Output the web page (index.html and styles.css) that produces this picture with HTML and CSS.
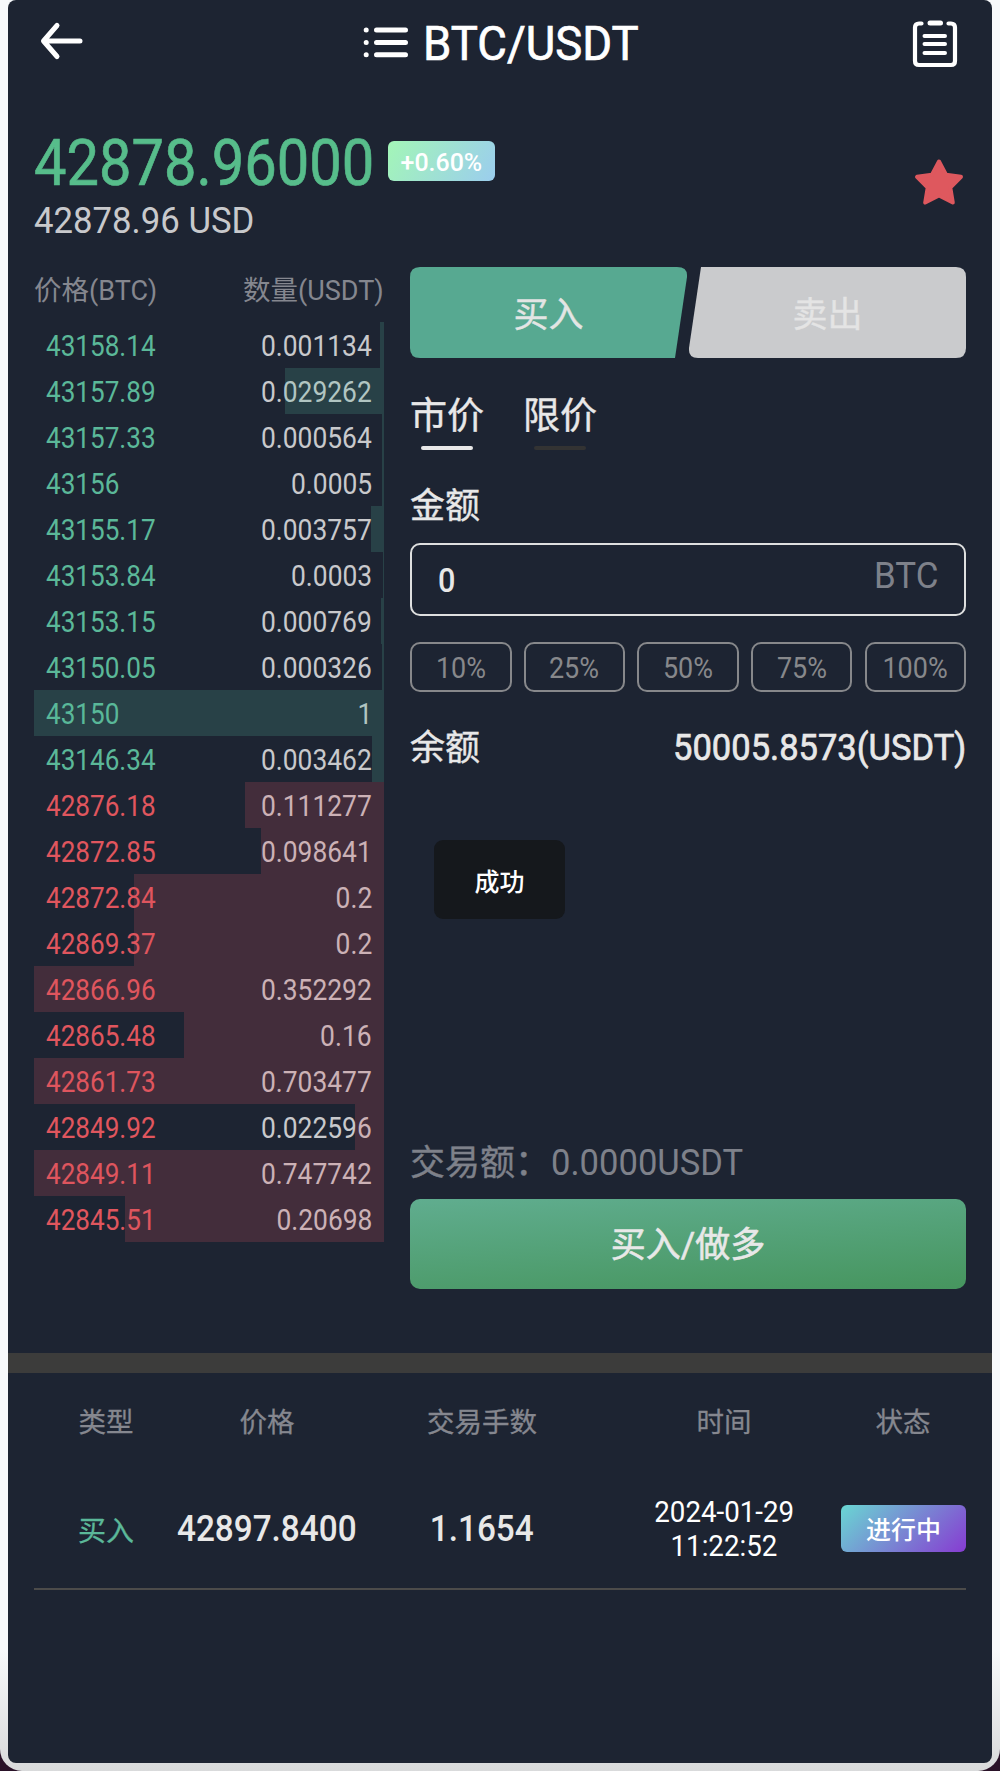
FILE: index.html
```html
<!DOCTYPE html>
<html lang="zh-CN">
<head>
<meta charset="utf-8">
<title>BTC/USDT</title>
<link rel="stylesheet" href="styles.css">
</head>
<body>
<div class="frame">
<div class="page">
  <header class="topbar">
    <svg class="icon-back" width="46" height="42" viewBox="0 0 46 42" fill="none" stroke="#fff" stroke-width="5" stroke-linecap="round" stroke-linejoin="round"><path d="M5 21H41M18 5.500L4.500 21L18 36.500"/></svg>
    <div class="pair">
      <svg width="46" height="34" viewBox="0 0 46 34" fill="none" stroke="#fff" stroke-width="5" stroke-linecap="round"><path d="M13.500 5H42.500M13.500 17.500H42.500M13.500 29.700H42.500M3.200 5h.01M3.200 17.500h.01M3.200 29.700h.01"/></svg>
      <h1 class="title"><span class="num">BTC/USDT</span></h1>
    </div>
    <svg class="icon-orders" width="46" height="50" viewBox="0 0 46 50" fill="none" stroke="#fff" stroke-width="4.200" stroke-linecap="round"><path d="M9.500 4.500H7Q3 4.500 3 8.500V42Q3 46 7 46H39Q43 46 43 42V8.500Q43 4.500 39 4.500H36.500"/><path d="M18 4H28.500" stroke-width="5"/><path d="M12.500 17H33M12.500 25H33M12.500 34H33" stroke-width="4"/></svg>
  </header>

  <section class="quote">
    <div>
      <div class="price-row">
        <div class="price"><span class="num">42878.96000</span></div>
        <div class="change"><span class="num">+0.60%</span></div>
      </div>
      <div class="usd"><span class="num">42878.96 USD</span></div>
    </div>
    <svg class="star" width="50" height="50" viewBox="0 0 50 50" fill="#de585e" stroke="#de585e" stroke-width="4" stroke-linejoin="round"><path d="M25 4.500L32 17.800L47 19.800L36.300 30.600L38.800 45.500L25 38.500L11.200 45.500L13.700 30.600L3 19.800L18 17.800Z"/></svg>
  </section>

  <main class="trade">
    <section class="book">
      <div class="book-head"><div>价格<span class="num left">(BTC)</span></div><div class="qty-head">数量<span class="num left">(USDT)</span></div></div>
      <div class="row buy"><span class="num left">43158.14</span><span class="num right">0.001134</span><i style="width:4px"></i></div>
      <div class="row buy"><span class="num left">43157.89</span><span class="num right">0.029262</span><i style="width:99px"></i></div>
      <div class="row buy"><span class="num left">43157.33</span><span class="num right">0.000564</span><i style="width:2px"></i></div>
      <div class="row buy"><span class="num left">43156</span><span class="num right">0.0005</span><i style="width:2px"></i></div>
      <div class="row buy"><span class="num left">43155.17</span><span class="num right">0.003757</span><i style="width:13px"></i></div>
      <div class="row buy"><span class="num left">43153.84</span><span class="num right">0.0003</span><i style="width:1px"></i></div>
      <div class="row buy"><span class="num left">43153.15</span><span class="num right">0.000769</span><i style="width:3px"></i></div>
      <div class="row buy"><span class="num left">43150.05</span><span class="num right">0.000326</span><i style="width:2px"></i></div>
      <div class="row buy"><span class="num left">43150</span><span class="num right">1</span><i style="width:350px"></i></div>
      <div class="row buy"><span class="num left">43146.34</span><span class="num right">0.003462</span><i style="width:12px"></i></div>
      <div class="row sell"><span class="num left">42876.18</span><span class="num right">0.111277</span><i style="width:139px"></i></div>
      <div class="row sell"><span class="num left">42872.85</span><span class="num right">0.098641</span><i style="width:123px"></i></div>
      <div class="row sell"><span class="num left">42872.84</span><span class="num right">0.2</span><i style="width:250px"></i></div>
      <div class="row sell"><span class="num left">42869.37</span><span class="num right">0.2</span><i style="width:250px"></i></div>
      <div class="row sell"><span class="num left">42866.96</span><span class="num right">0.352292</span><i style="width:350px"></i></div>
      <div class="row sell"><span class="num left">42865.48</span><span class="num right">0.16</span><i style="width:200px"></i></div>
      <div class="row sell"><span class="num left">42861.73</span><span class="num right">0.703477</span><i style="width:350px"></i></div>
      <div class="row sell"><span class="num left">42849.92</span><span class="num right">0.022596</span><i style="width:29px"></i></div>
      <div class="row sell"><span class="num left">42849.11</span><span class="num right">0.747742</span><i style="width:350px"></i></div>
      <div class="row sell"><span class="num left">42845.51</span><span class="num right">0.20698</span><i style="width:259px"></i></div>
    </section>

    <section class="order">
      <div class="sides"><div class="side side-buy">买入</div><div class="side side-sell">卖出</div></div>
      <div class="types"><div class="type active">市价</div><div class="type">限价</div></div>
      <div class="label amount-label">金额</div>
      <div class="input"><span class="num left value">0</span><span class="num right unit">BTC</span></div>
      <div class="percents">
        <div><span class="num">10%</span></div><div><span class="num">25%</span></div><div><span class="num">50%</span></div><div><span class="num">75%</span></div><div><span class="num">100%</span></div>
      </div>
      <div class="label balance"><span>余额</span><span class="num right">50005.8573(USDT)</span></div>
      <div class="turnover">交易额：<span class="num left">0.0000USDT</span></div>
      <div class="submit">买入/做多</div>
    </section>
  </main>

  <section class="orders">
    <div class="grid head"><div>类型</div><div>价格</div><div>交易手数</div><div>时间</div><div>状态</div></div>
    <div class="grid item">
      <div class="kind">买入</div>
      <div class="strong"><span class="num">42897.8400</span></div>
      <div class="strong"><span class="num">1.1654</span></div>
      <div class="time"><span class="num">2024-01-29</span><span class="num">11:22:52</span></div>
      <div class="status">进行中</div>
    </div>
  </section>
  <div class="toast">成功</div>
</div>
</div>
</body>
</html>
```
FILE: styles.css
```css
* { box-sizing: border-box; }
body {
  margin: 0;
  background: #2a1228;
  font-family: Roboto, "Noto Sans CJK SC", sans-serif;
  color: #e8e8e8;
}
.frame {
  height: 1771px;
  padding: 0 8px 8px;
  background: linear-gradient(#f7f9fb 0, #f7f9fb 1650px, #d9dadb 1771px);
  border-radius: 0 0 22px 22px;
}
.page {
  position: relative;
  height: 1763px;
  background: #1d2432;
  border-radius: 8px;
  overflow: hidden;
}
svg { display: block; }

/* Condensed figures and Latin captions */
.num { display: inline-block; transform: scaleX(.9); white-space: nowrap; }
.left { transform-origin: left center; }
.right { transform-origin: right center; }

.topbar {
  height: 86px;
  padding: 0 34px 0 31px;
  display: flex;
  justify-content: space-between;
}
.icon-back { margin-top: 20px; }
.icon-orders { margin-top: 19px; }
.pair { display: flex; align-items: flex-start; color: #fff; width: 285px; margin-left: 14px; }
.pair svg { margin-top: 25px; flex: none; }
.title { margin: 14px 0 0 14px; font-size: 48.500px; line-height: 60px; font-weight: 400; }
.title .num { transform: scaleX(.938); transform-origin: left center; -webkit-text-stroke: .7px; }

.quote {
  height: 181px;
  padding: 46px 28px 0 26px;
  display: flex;
  justify-content: space-between;
}
.price-row { display: flex; }
.price { width: 354px; font-size: 65.500px; line-height: 62px; height: 60px; color: #57bd8b; -webkit-text-stroke: .7px; }
.price .num { transform: scaleX(.883); transform-origin: left center; }
.change {
  width: 107px; height: 40px; margin-top: 9px;
  font-size: 26.500px; line-height: 42px; text-align: center; font-weight: 500; color: #fff;
  background: linear-gradient(120deg, #a3f6b7, #9bcdee);
  border-radius: 6px;
}
.change .num { margin: 0 -10px; transform: scaleX(.94); }
.usd { margin-top: 8px; font-size: 36px; line-height: 42px; color: #c8c9cc; }
.usd .num { transform: scaleX(.965); transform-origin: left center; }
.star { margin-top: 25px; }

.trade { height: 1086px; padding: 0 26px; display: flex; justify-content: space-between; }
.book { width: 350px; }
.book-head {
  height: 55px; padding-top: 4px;
  display: flex; justify-content: space-between;
  font-size: 27.500px; line-height: 40px; color: #85878f;
}
.book-head .num { font-size: 28px; transform: scaleX(.965); }
.qty-head { width: 141px; white-space: nowrap; }
.row {
  position: relative; height: 46px; padding: 0 12px;
  display: flex; justify-content: space-between;
  font-size: 29px; line-height: 49px; color: #c8c9cc;
}
.row .right { transform: scaleX(.91); }
.row i { position: absolute; top: 0; right: 0; height: 46px; opacity: .2; }
.buy .left { color: #5bb899; }
.sell .left { color: #e0565e; }
.buy i { background: #54b99a; }
.sell i { background: #de5660; }

.order { width: 556px; }
.sides { display: flex; justify-content: space-between; height: 91px; }
.side { width: 277px; font-size: 35px; line-height: 98px; text-align: center; color: #e3e5e4; -webkit-text-stroke: .4px; }
.side-buy {
  background: #57a991;
  clip-path: path("M10 0H267Q278 0 277 10L265 91H10Q0 91 0 81V10Q0 0 10 0Z");
}
.side-sell {
  background: #cacbcd; color: #e4e4e4;
  clip-path: path("M12 0H267Q277 0 277 10V81Q277 91 267 91H9Q-1 91 0 81Z");
}
.types { margin-top: 32px; display: flex; gap: 39px; }
.type { width: 74px; height: 60px; font-size: 37px; line-height: 54px; text-align: center; -webkit-text-stroke: .4px; }
.type::after { content: ""; display: block; width: 52px; height: 4px; margin: 2px auto 0; border-radius: 2px; background: #333; }
.type.active::after { background: #e8e8e8; }
.label { font-size: 35px; line-height: 44px; height: 40px; }
.label, .turnover { -webkit-text-stroke: .4px; }
.amount-label { margin-top: 35px; }
.input {
  height: 73px; margin-top: 18px; padding: 0 26px;
  display: flex; justify-content: space-between;
  border: 2px solid #dedfdf; border-radius: 10px;
}
.value { font-size: 34px; line-height: 71px; font-weight: 500; }
.unit { font-size: 36px; line-height: 62px; color: #7e818a; transform: scaleX(.97); }
.percents { margin-top: 26px; display: flex; justify-content: space-between; }
.percents div {
  width: 101.500px; height: 50px; border: 2px solid #87888b; border-radius: 10px;
  font-size: 29px; line-height: 48px; text-align: center; color: #87888b;
}
.percents .num { transform: scaleX(.93); margin: 0 -10px; }
.balance { margin-top: 35px; display: flex; justify-content: space-between; }
.balance .num { font-size: 37px; line-height: 42px; transform: scaleX(.933); -webkit-text-stroke: .7px; }
.turnover { margin-top: 374px; height: 40px; font-size: 35px; line-height: 43px; color: #7e818a; white-space: nowrap; }
.turnover .num { font-size: 37px; transform: scaleX(.935); margin-left: 1px; -webkit-text-stroke: 0; }
.submit {
  height: 90px; margin-top: 18px; border-radius: 10px;
  font-size: 35px; line-height: 94px; text-align: center; -webkit-text-stroke: .6px;
  background: linear-gradient(176deg, #60ad8f, #46955e);
}

.orders { border-top: 20px solid #3c3c3b; padding: 0 26px; }
.grid { display: grid; grid-template-columns: 144px 178px 252px 232px 126px; text-align: center; align-items: center; }
.head { height: 99px; padding-top: 1px; font-size: 27.500px; line-height: 40px; color: #85878f; -webkit-text-stroke: .3px; }
.item { height: 118px; padding-bottom: 3px; border-bottom: 2px solid #4c4b4a; }
.kind { font-size: 28px; color: #5bb899; -webkit-text-stroke: .3px; }
.strong { font-size: 37px; font-weight: 500; }
.strong .num { margin: 0 -20px; }
.time { font-size: 29px; line-height: 34px; color: #fff; display: flex; flex-direction: column; align-items: center; }
.time .num { transform: scaleX(.955); }
.status {
  height: 47px; margin-left: 1px; border-radius: 6px;
  font-size: 25px; line-height: 51px; font-weight: 500; color: #fff;
  background: linear-gradient(135deg, #69d7d3, #873bd2);
}
.toast {
  position: absolute; left: 426px; top: 840px; width: 131px; height: 79px;
  border-radius: 9px; background: #15181c; color: #fff;
  font-size: 25px; line-height: 85px; text-align: center; font-weight: 500;
}
```
